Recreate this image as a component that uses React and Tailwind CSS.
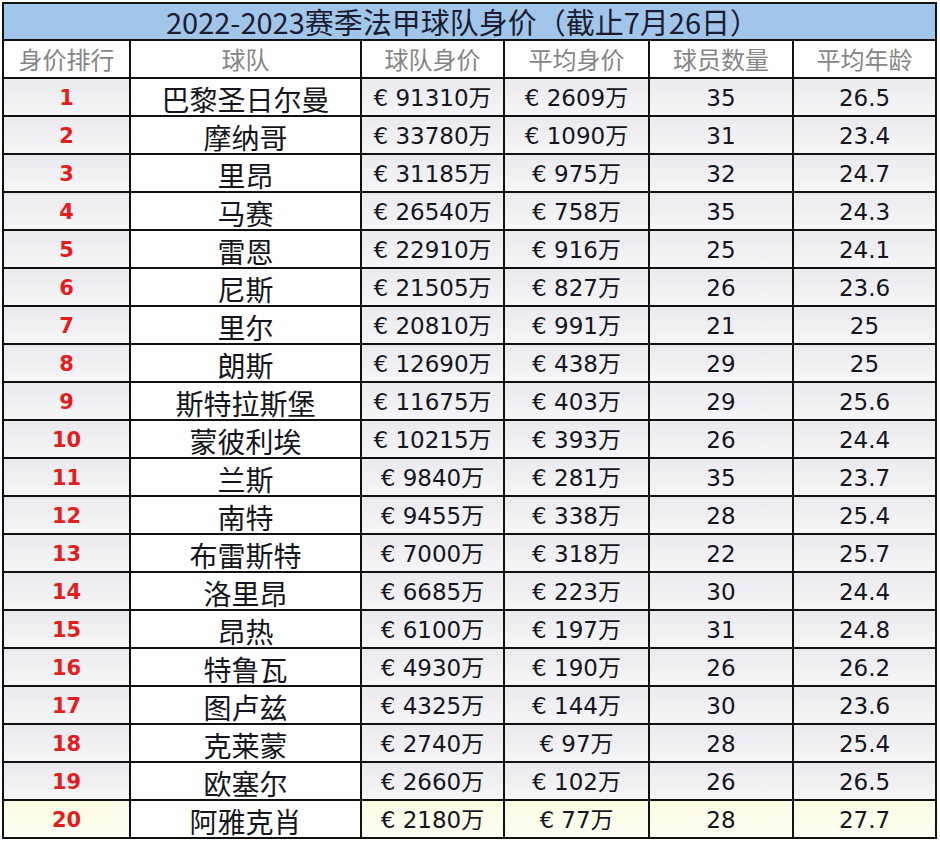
const rows = [
  ['巴黎圣日尔曼', 91310, 2609, 35, '26.5'],
  ['摩纳哥', 33780, 1090, 31, '23.4'],
  ['里昂', 31185, 975, 32, '24.7'],
  ['马赛', 26540, 758, 35, '24.3'],
  ['雷恩', 22910, 916, 25, '24.1'],
  ['尼斯', 21505, 827, 26, '23.6'],
  ['里尔', 20810, 991, 21, '25'],
  ['朗斯', 12690, 438, 29, '25'],
  ['斯特拉斯堡', 11675, 403, 29, '25.6'],
  ['蒙彼利埃', 10215, 393, 26, '24.4'],
  ['兰斯', 9840, 281, 35, '23.7'],
  ['南特', 9455, 338, 28, '25.4'],
  ['布雷斯特', 7000, 318, 22, '25.7'],
  ['洛里昂', 6685, 223, 30, '24.4'],
  ['昂热', 6100, 197, 31, '24.8'],
  ['特鲁瓦', 4930, 190, 26, '26.2'],
  ['图卢兹', 4325, 144, 30, '23.6'],
  ['克莱蒙', 2740, 97, 28, '25.4'],
  ['欧塞尔', 2660, 102, 26, '26.5'],
  ['阿雅克肖', 2180, 77, 28, '27.7'],
];

const headers = ['身价排行', '球队', '球队身价', '平均身价', '球员数量', '平均年龄'];

const cjk = "font-['Noto_Sans_CJK_SC',sans-serif]";
const num = "font-['DejaVu_Sans','Noto_Sans_CJK_SC',sans-serif]";

function Cell({ children, shade, className = '' }) {
  const bg =
    shade === 'yellow'
      ? 'bg-gradient-to-b from-[#fbfbe4] to-[#fefef2]'
      : shade === 'gray'
      ? 'bg-gradient-to-b from-[#eaeaee] to-[#f6f6f9]'
      : 'bg-white';
  return (
    <div className={`flex items-center justify-center pt-[3px] h-[36px] ${bg} ${className}`}>
      {children}
    </div>
  );
}

export default function App() {
  return (
    <div className="w-[940px] h-[842px] bg-white pl-[2px] pt-[2px]">
      <div className="grid w-[935px] grid-cols-[125px_229px_141px_143px_142px_141px] gap-[2px] bg-[#111] p-[2px]">
        {/* Title */}
        <div
          className={`col-span-6 flex h-[35px] items-end justify-center bg-[#a2c6ea] pr-[14px] text-[29px] leading-[36px] text-[#1c1c30] ${cjk}`}
        >
          2022-2023赛季法甲球队身价（截止7月26日）
        </div>

        {/* Header */}
        {headers.map((h) => (
          <div
            key={h}
            className={`flex h-[36px] items-center justify-center bg-white text-[24px] text-[#858585] ${cjk}`}
          >
            {h}
          </div>
        ))}

        {/* Data rows */}
        {rows.map(([team, value, avg, players, age], i) => {
          const shade = i === 19 ? 'yellow' : 'gray';
          return [
            <Cell key={`r${i}`} shade={shade}>
              <span className="font-['DejaVu_Sans',sans-serif] text-[21px] font-bold text-[#e31e1e]">
                {i + 1}
              </span>
            </Cell>,
            <Cell key={`t${i}`}>
              <span className={`${cjk} text-[28px] leading-[36px] text-[#151520]`}>{team}</span>
            </Cell>,
            <Cell key={`v${i}`} shade={shade}>
              <span className={`${num} text-[23px] text-[#151520]`}>€ {value}万</span>
            </Cell>,
            <Cell key={`a${i}`} shade={shade}>
              <span className={`${num} text-[23px] text-[#151520]`}>€ {avg}万</span>
            </Cell>,
            <Cell key={`p${i}`} shade={shade}>
              <span className={`${num} text-[23px] text-[#151520]`}>{players}</span>
            </Cell>,
            <Cell key={`g${i}`} shade={shade}>
              <span className={`${num} text-[23px] text-[#151520]`}>{age}</span>
            </Cell>,
          ];
        })}
      </div>
    </div>
  );
}
